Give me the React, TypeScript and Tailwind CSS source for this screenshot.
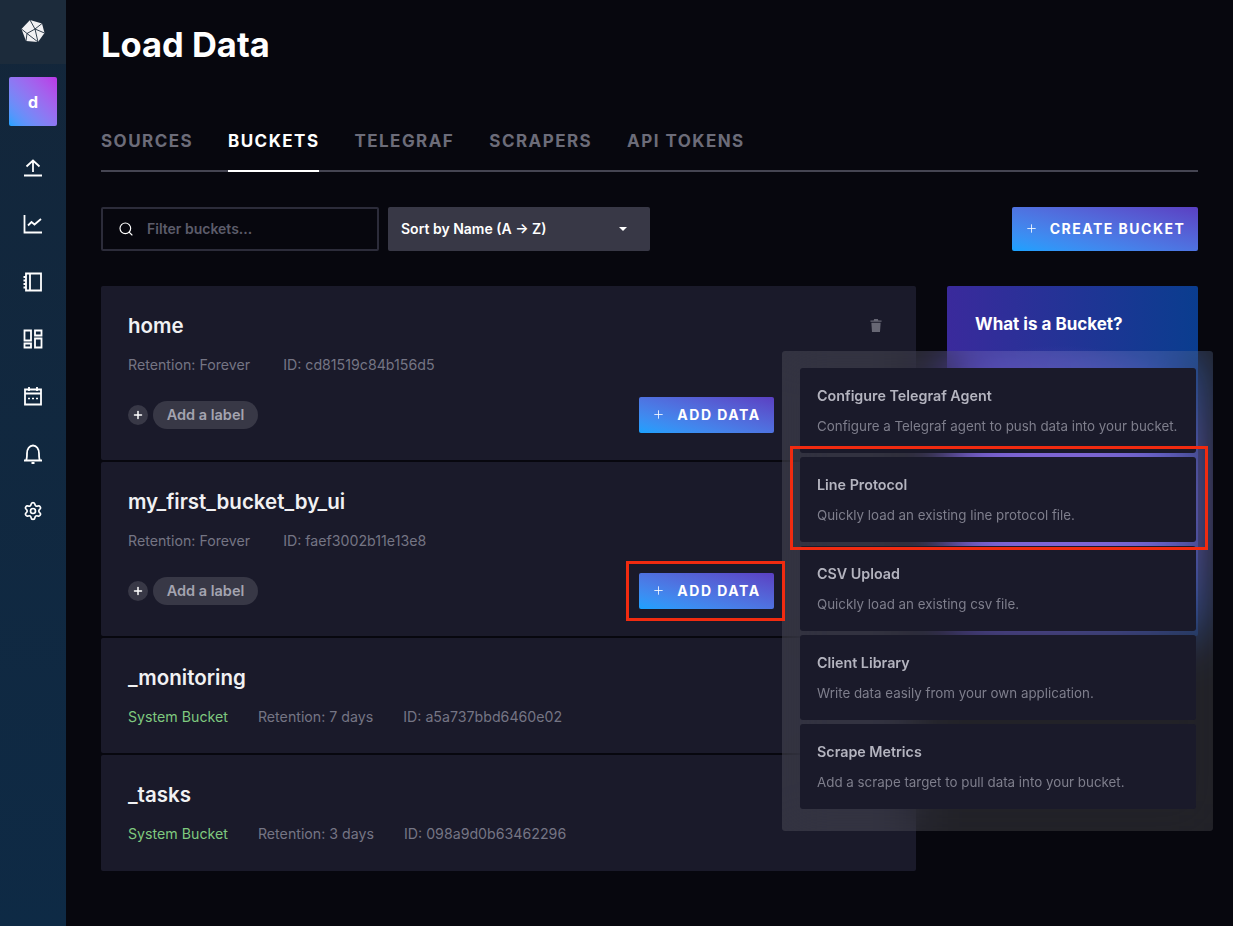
import { Plus, Search, Settings } from 'lucide-react';

const navIcons = [
  <svg key="up" viewBox="0 0 20 20" className="h-5 w-5" fill="none" stroke="currentColor" strokeWidth="1.8">
    <path d="M1 18.500h18M10 15V3.500M3.500 9.500 10 3.500l6.500 6" />
  </svg>,
  <svg key="chart" viewBox="0 0 20 20" className="h-5 w-5" fill="none" stroke="currentColor" strokeWidth="1.8">
    <path d="M1.500 1v17.500H19M5 11.500 8.500 8l3 2.500L18 5" />
  </svg>,
  <svg key="book" viewBox="0 0 20 20" className="h-5 w-5" fill="none" stroke="currentColor" strokeWidth="1.8">
    <path d="M3 1.500h15v17H3zM7 1.500v17M0.500 5H3M0.500 8.500H3M0.500 12H3M0.500 15.500H3" />
  </svg>,
  <svg key="dash" viewBox="0 0 20 20" className="h-5 w-5" fill="none" stroke="currentColor" strokeWidth="1.8">
    <path d="M1.500 1.500h6.500v10H1.500zM12 1.500h6.500v5H12zM12 9.500h6.500v9H12zM1.500 14.500h6.500v4H1.500z" />
  </svg>,
  <svg key="cal" viewBox="0 0 20 20" className="h-5 w-5" fill="none" stroke="currentColor" strokeWidth="1.8">
    <path d="M2 3.500h16v15H2zM2 7.500h16M6 1v4M14 1v4" />
    <path d="M5 12.500h2M9 12.500h2M13 12.500h2" strokeWidth="1.600" />
  </svg>,
  <svg key="bell" viewBox="0 0 20 20" className="h-5 w-5" fill="none" stroke="currentColor" strokeWidth="1.8">
    <path d="M1 16.500h18M3 16.500c1-1.500 1-3.500 1-7C4 5 6.500 1.500 10 1.500S16 5 16 9.500c0 3.500 0 5.500 1 7M8.500 19h3" />
  </svg>,
  <Settings key="gear" className="h-5 w-5" strokeWidth={2} />,
];

const buckets = [
  { name: 'home', retention: 'Forever', id: 'cd81519c84b156d5', h: 'h-[174px]', trash: true },
  { name: 'my_first_bucket_by_ui', retention: 'Forever', id: 'faef3002b11e13e8', h: 'h-[174px]' },
  { name: '_monitoring', retention: '7 days', id: 'a5a737bbd6460e02', h: 'h-[115px]', system: true },
  { name: '_tasks', retention: '3 days', id: '098a9d0b63462296', h: 'h-[116px]', system: true },
];

const options = [
  { title: 'Configure Telegraf Agent', text: 'Configure a Telegraf agent to push data into your bucket.' },
  { title: 'Line Protocol', text: 'Quickly load an existing line protocol file.' },
  { title: 'CSV Upload', text: 'Quickly load an existing csv file.' },
  { title: 'Client Library', text: 'Write data easily from your own application.' },
  { title: 'Scrape Metrics', text: 'Add a scrape target to pull data into your bucket.' },
];

const tabs = ['Sources', 'Buckets', 'Telegraf', 'Scrapers', 'API Tokens'];

const GradientButton = ({ label, className }: { label: string; className: string }) => (
  <button className={`flex items-center justify-center gap-[12px] rounded-[2px] bg-linear-to-tr from-[#17a2ff] to-[#5a3fc2] pb-[1px] text-[14px] font-bold uppercase tracking-[1.500px] text-white ${className}`}>
    <Plus className="h-[13px] w-[13px]" strokeWidth={1.5} />
    {label}
  </button>
);

const BucketCard = ({ bucket }: { bucket: (typeof buckets)[number] }) => (
  <div className={`relative rounded-[2px] bg-[#1a1a2a] pl-[27px] pt-[27px] ${bucket.h}`}>
    <div className="text-[20.500px] font-semibold leading-[26px] text-[#f1f1f3]">{bucket.name}</div>
    <div className={`mt-[18px] flex text-[14.200px] leading-[16px] text-[#757584] ${bucket.system ? 'gap-[30px]' : 'gap-[33px]'}`}>
      {bucket.system && <span className="text-[#7fc97f]">System Bucket</span>}
      <span>Retention: {bucket.retention}</span>
      <span>ID: {bucket.id}</span>
    </div>
    {!bucket.system && (
      <div className="mt-[24px] flex items-center justify-between pr-[142px]">
        <div className="flex items-center gap-[5px]">
          <span className="flex h-5 w-5 items-center justify-center rounded-full bg-[#383846] text-white">
            <Plus className="h-3 w-3" strokeWidth={3} />
          </span>
          <span className="flex h-7 w-[105px] items-center justify-center rounded-full bg-[#383846] text-[14.500px] font-semibold text-[#a4a4b0]">
            Add a label
          </span>
        </div>
        <GradientButton label="Add Data" className="h-9 w-[135px]" />
      </div>
    )}
    {bucket.trash && (
      <svg viewBox="0 0 12 14" className="absolute right-[34px] top-[33px] h-[13px] w-[12px]" fill="#676774">
        <path d="M4 0h4l.5 1.500H12V3H0V1.500h3.500zM1 4h10l-.7 10H1.700z" />
      </svg>
    )}
  </div>
);

export default function App() {
  return (
    <div className="relative flex h-[926px] w-[1233px] overflow-hidden bg-[#07070e] font-['Inter',sans-serif]">
      <aside className="flex h-full w-[66px] shrink-0 flex-col items-center bg-linear-to-b from-[#13263a] to-[#0e2a45] text-white">
        <div className="flex h-[64px] w-full items-center justify-center bg-[#1c2b3b] pb-[2px]">
          <svg viewBox="0 0 24 24" className="h-[24px] w-[24px]">
            <path d="M9 1 21 4.500 23.500 14 17 23 5 22 .5 10z" fill="#f1f1f3" />
            <path d="M9 1 14 10 21 4.500M14 10l-8 4.500-5.500-4.500M14 10l3 13M6 14.500 5 22M14 10l9.500 4M6 14.500 17 23" stroke="#1c2b3b" strokeWidth="0.9" fill="none" />
          </svg>
        </div>
        <div className="mt-[13px] flex h-[49px] w-[48px] items-center justify-center rounded-[2px] bg-linear-to-tr from-[#17a2ff] to-[#bb35e6] text-[16px] font-bold">
          d
        </div>
        <nav className="mt-[31px] flex flex-col items-center gap-[37.330px]">{navIcons}</nav>
      </aside>

      <main className="w-[1132px] pl-[35px]">
        <h1 className="pt-[24px] text-[34.500px] font-bold leading-[42px] text-white">Load Data</h1>

        <div className="mt-[49px] flex h-[57px] w-[1097px] gap-[35px] border-b-2 border-[#454552]">
          {tabs.map((tab) => (
            <div
              key={tab}
              className={`-mb-[2px] h-[57px] border-b-2 pt-[14px] text-[17px] font-bold uppercase leading-[24px] tracking-[1.450px] ${tab === 'Buckets' ? 'border-white text-white' : 'border-transparent text-[#6c6c79]'}`}
            >
              {tab}
            </div>
          ))}
        </div>

        <div className="mt-[35px] flex h-[44px] w-[1097px] items-center">
          <div className="flex h-full w-[278px] items-center gap-[13px] rounded-[2px] border-2 border-[#2c2c3a] pb-[1px] pl-[15px] text-[14px] font-semibold text-[#5c5c6a]">
            <Search className="h-4 w-4 text-white" strokeWidth={1.75} />
            Filter buckets...
          </div>
          <div className="ml-[9px] flex h-full w-[262px] items-center justify-between rounded-[2px] bg-[#383846] pb-[1px] pl-[13px] pr-[23px] text-[14px] font-semibold text-white">
            Sort by Name (A → Z)
            <span className="h-0 w-0 border-x-[4px] border-t-[4px] border-x-transparent border-t-white" />
          </div>
          <GradientButton label="Create Bucket" className="ml-auto h-full w-[186px]" />
        </div>

        <div className="mt-[35px] flex w-[1097px] items-start justify-between">
          <div className="flex w-[815px] flex-col gap-[2px]">
            {buckets.map((bucket) => (
              <BucketCard key={bucket.name} bucket={bucket} />
            ))}
          </div>
          <div className="h-[350px] w-[251px] rounded-[2px] bg-[radial-gradient(ellipse_85%_45%_at_45%_62%,#7355d2_0%,#7355d2_35%,transparent_100%),linear-gradient(90deg,#3a2a9c,#0a3d8f)] pl-[28px] pt-[25px] text-[17px] font-bold leading-[26px] text-white">
            What is a Bucket?
          </div>
        </div>
      </main>

      {/* add data popover, sits over the cards and side panel */}
      <div className="absolute left-[782px] top-[351px] flex h-[480px] w-[431px] flex-col gap-[4px] rounded-[3px] bg-white/[0.11] pl-[18px] pr-[17px] pt-[17px] backdrop-blur-xl">
        {options.map((option) => (
          <div key={option.title} className="h-[85px] rounded-[3px] bg-[#1a1a2a] pl-[17px] pt-[18px]">
            <div className="text-[14.300px] font-semibold leading-[20px] text-[#b4b4bf]">{option.title}</div>
            <div className="mt-[10px] text-[13.350px] leading-[20px] text-[#7e7e8c]">{option.text}</div>
          </div>
        ))}
      </div>

      {/* red callouts */}
      <div className="absolute left-[626px] top-[561px] h-[60px] w-[159px] border-[3px] border-[#f12b10]" />
      <div className="absolute left-[790px] top-[446px] h-[104px] w-[418px] border-[3px] border-[#f12b10]" />
    </div>
  );
}
